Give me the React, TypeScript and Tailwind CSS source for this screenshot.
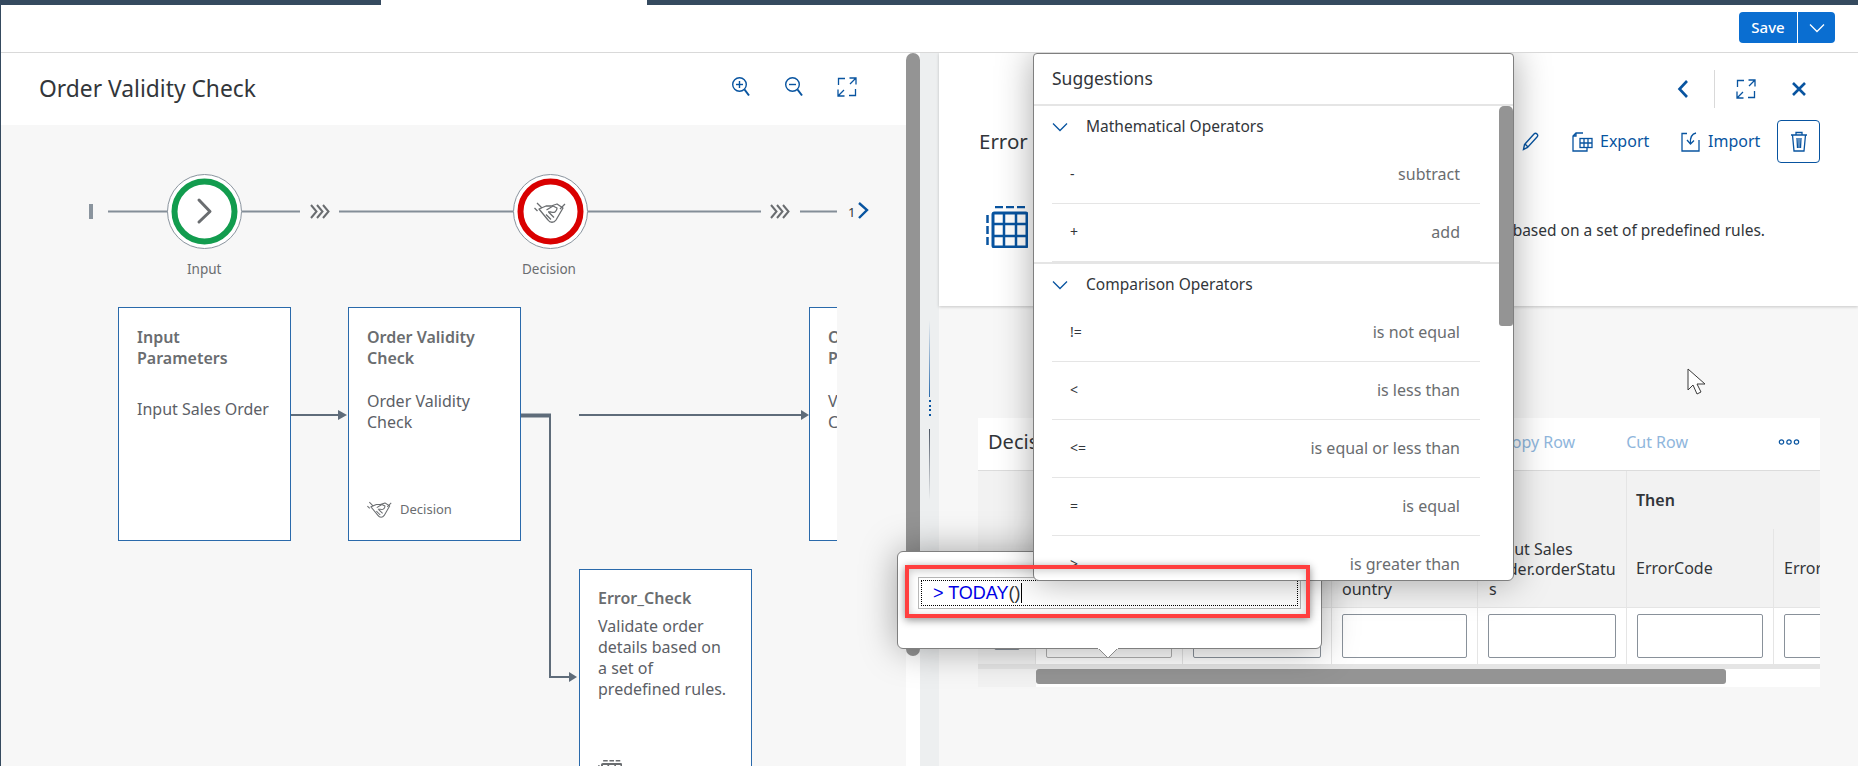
const BLUE = '#0854a0';

function ZoomGlass({ minus = false }: { minus?: boolean }) {
  return (
    <svg width="20" height="22" viewBox="0 0 20 22" fill="none" stroke={BLUE} strokeWidth="1.4">
      <circle cx="8.5" cy="8.5" r="6.8" />
      <path d="M13.5 13.5 L18 19.5" strokeWidth="2" />
      <path d="M5 8.5 H12" />
      {!minus && <path d="M8.5 5 V12" />}
    </svg>
  );
}

function FullScreenIcon() {
  return (
    <svg width="20" height="20" viewBox="0 0 20 20" fill="none" stroke={BLUE} strokeWidth="1.3">
      <path d="M8 1.5 H1.5 V8" />
      <path d="M12 18.5 H18.5 V12" />
      <path d="M12.5 1 H19 V7.5 M19 1 L13 7" />
      <path d="M1 12.5 V19 H7.5 M1 19 L7 13" />
    </svg>
  );
}

function Handshake({ size = 32, color = '#6a6d70' }: { size?: number; color?: string }) {
  return (
    <svg width={size} height={size * 0.8125} viewBox="0 0 32 26" fill="none" stroke={color} strokeWidth="1.3" strokeLinejoin="round">
      <path d="M3 4 L8 9 M0.5 9 L3.5 12 M31 5 L26 10" />
      <path d="M5 10 L14 21 C16 24 20 24 22 21 L29 9 L23 5 L17 7 L12 7 Z" />
      <path d="M12.5 11 L19 7 L23 9 C23 12 20.5 14.5 17 13 L14 13" />
      <path d="M12 15.5 L17 20.5 M15 13.5 L20 18.5" />
    </svg>
  );
}

function TableIcon({ size = 42, stroke = 2.5, color = BLUE }: { size?: number; stroke?: number; color?: string }) {
  return (
    <svg width={size} height={size} viewBox="0 0 42 42" fill="none" stroke={color} strokeWidth={stroke}>
      <path d="M9 1 H17 M20 1 H28 M31 1 H39" />
      <path d="M1.5 9 V17 M1.5 20 V28 M1.5 31 V39" />
      <rect x="7" y="7" width="34" height="34" rx="1.5" strokeWidth={stroke + 0.5} />
      <path d="M18 7 V41 M30 7 V41 M7 18 H41 M7 30 H41" />
    </svg>
  );
}

function FlowChevrons() {
  return (
    <svg width="20" height="16" viewBox="0 0 20 16" fill="none" stroke="#6a6d70" strokeWidth="2">
      <path d="M1 1.5 L6.5 8 L1 14.5 M7 1.5 L12.5 8 L7 14.5 M13 1.5 L18.5 8 L13 14.5" />
    </svg>
  );
}

function FlowNode({ ring, cx }: { ring: string; cx: number }) {
  return (
    <>
      <circle cx={cx} cy="86.5" r="37" fill="#fff" stroke="#8a949e" strokeWidth="1" />
      <circle cx={cx} cy="86.5" r="30" fill="#fff" stroke={ring} strokeWidth="6" />
    </>
  );
}

function ProcessFlow() {
  return (
    <svg className="absolute left-0 top-0" width="880" height="140" viewBox="0 0 880 140" fill="none">
      <rect x="88" y="79" width="4" height="15" fill="#8a949e" />
      <g stroke="#848e98" strokeWidth="2">
        <path d="M107 86.5 H167 M241 86.5 H299 M338 86.5 H512 M587 86.5 H760 M799 86.5 H836" />
      </g>
      <FlowNode ring="#129c4e" cx={203.5} />
      <FlowNode ring="#d90000" cx={549.5} />
      <path d="M198 75 L209 86.5 L198 97" stroke="#6a6d70" strokeWidth="3" strokeLinecap="round" strokeLinejoin="round" />
      <g transform="translate(533 74)">
        <Handshake />
      </g>
      <g transform="translate(309 78.5)">
        <FlowChevrons />
      </g>
      <g transform="translate(769 78.5)">
        <FlowChevrons />
      </g>
      <path d="M858 79 L866 86 L858 94" stroke={BLUE} strokeWidth="2.4" transform="translate(0 -1)" />
    </svg>
  );
}

function Connectors() {
  return (
    <svg className="absolute left-0 top-0" width="836" height="641" viewBox="0 0 836 641" fill="none">
      <g stroke="#5f6c7a" strokeWidth="2">
        <path d="M290 290 H338" />
        <path d="M578 290 H800" />
        <path d="M549 290 V552 H568" />
      </g>
      <path d="M520 290.5 H550" stroke="#5f6c7a" strokeWidth="4" />
      <g fill="#5f6c7a">
        <path d="M337 285 L346 290 L337 295 Z" />
        <path d="M800 285 L808 290 L800 295 Z" />
        <path d="M568 547 L576 552 L568 557 Z" />
      </g>
    </svg>
  );
}

function Card({ left, top, height, titleTop = 19, title, body, gap, children }: {
  left: number;
  top: number;
  height: number;
  titleTop?: number;
  title: string[];
  body: string[];
  gap: string;
  children?: React.ReactNode;
}) {
  return (
    <div
      className="absolute w-[173px] border border-[#2a6aab] bg-white pl-[18px] pr-2 text-base leading-[21px]"
      style={{ left, top, height }}
    >
      <div className="font-semibold text-[#6a6d70]" style={{ marginTop: titleTop }}>
        {title.map((line) => (
          <div key={line} className="whitespace-nowrap">{line}</div>
        ))}
      </div>
      <div className={`${gap} text-[#5c6066]`}>
        {body.map((line) => (
          <div key={line} className="whitespace-nowrap">{line}</div>
        ))}
      </div>
      {children}
    </div>
  );
}

function LeftPanel() {
  return (
    <div className="flex w-[905px] flex-col bg-white">
      <div className="flex h-[72px] items-center justify-between pl-[38px] pr-[49px]">
        <h1 className="text-[22.8px] font-normal text-[#32363a]">Order Validity Check</h1>
        <div className="-mt-[5px] flex items-center gap-[33px]">
          <ZoomGlass />
          <ZoomGlass minus />
          <FullScreenIcon />
        </div>
      </div>
      <div className="relative flex-1 bg-[#f7f7f7]">
        <ProcessFlow />
        <span className="absolute left-[186px] top-[134px] text-[13.5px] text-[#6a6d70]">Input</span>
        <span className="absolute left-[521px] top-[134px] text-[13.5px] text-[#6a6d70]">Decision</span>
        <span className="absolute left-[847px] top-[78px] text-[13px] text-[#32363a]">1</span>
        <div className="absolute left-0 top-0 h-full w-[836px] overflow-hidden">
          <Connectors />
          <Card left={117} top={182} height={234} title={['Input', 'Parameters']} body={['Input Sales Order']} gap="mt-[30px]" />
          <Card left={347} top={182} height={234} title={['Order Validity', 'Check']} body={['Order Validity', 'Check']} gap="mt-[22px]">
            <div className="absolute bottom-[20px] left-[18px] flex items-center gap-2 text-[13px] text-[#6a6d70]">
              <Handshake size={25} />
              <span>Decision</span>
            </div>
          </Card>
          <Card left={808} top={182} height={234} title={['Order', 'Parameters']} body={['Validate', 'Check']} gap="mt-[22px]" />
          <Card left={578} top={444} height={260} titleTop={18} title={['Error_Check']} body={['Validate order', 'details based on', 'a set of', 'predefined rules.']} gap="mt-[7px]">
            <div className="absolute left-[18px] top-[190px]">
              <TableIcon size={24} stroke={3} color="#6a6d70" />
            </div>
          </Card>
        </div>
      </div>
    </div>
  );
}

function Sash() {
  return (
    <div className="flex w-[19px] flex-col items-center bg-[#edeff0]">
      <div className="mt-[267px] h-[77px] w-px bg-gradient-to-b from-transparent to-[#2a6aab]" />
      <div className="mt-[3px] flex h-[16px] flex-col justify-between">
        {[0, 1, 2, 3].map((i) => (
          <div key={i} className="h-[2px] w-[2px] bg-[#0854a0]" />
        ))}
      </div>
      <div className="mt-[13px] h-[71px] w-px bg-gradient-to-b from-[#4b5563] to-transparent" />
    </div>
  );
}

function HeaderCell({ className = '', children }: { className?: string; children?: React.ReactNode }) {
  return <div className={`shrink-0 border-r border-[#e5e5e5] ${className}`}>{children}</div>;
}

function ValueInput({ muted = false }: { muted?: boolean }) {
  return <div className={`h-[44px] flex-1 rounded-[2px] border bg-white ${muted ? 'border-[#b0b0b0]' : 'border-[#89919a]'}`} />;
}

function DecisionTable() {
  const columns = ['w-[58px]', 'w-[147px]', 'w-[149px]', 'w-[146px]', 'w-[149px]', 'w-[147px]'];
  return (
    <div className="flex w-[842px] flex-col overflow-hidden bg-white text-base text-[#32363a]">
      <div className="flex h-[52px] items-center pb-[4px] pl-[10px] pr-[20px]">
        <span className="text-[20px]">Decision Table</span>
        <div className="ml-auto flex items-center text-base text-[#8fb6dc]">
          <span>Copy Row</span>
          <span className="ml-[51px]">Cut Row</span>
          <svg className="ml-[90px]" width="22" height="8" viewBox="0 0 22 8" fill="none" stroke={BLUE} strokeWidth="1.2">
            <circle cx="3.5" cy="4" r="2.2" />
            <circle cx="11" cy="4" r="2.2" />
            <circle cx="18.5" cy="4" r="2.2" />
          </svg>
        </div>
      </div>
      <div className="flex h-[137px] border-t border-[#dcdcdc] bg-[#f2f2f2]">
        <HeaderCell className={columns[0]} />
        <HeaderCell className={columns[1]} />
        <HeaderCell className={columns[2]} />
        <HeaderCell className={`${columns[3]} flex items-end px-[10px] pb-[8px] leading-[20px]`}>
          <span className="whitespace-nowrap">Input Sales<br />Order.c<br />ountry</span>
        </HeaderCell>
        <HeaderCell className={`${columns[4]} flex items-end px-[11px] pb-[8px] leading-[20px]`}>
          <span className="whitespace-nowrap">Input Sales<br />Order.orderStatu<br />s</span>
        </HeaderCell>
        <div className="flex min-w-0 flex-1 flex-col overflow-hidden whitespace-nowrap">
          <div className="flex h-[58px] items-center pl-[9px] font-semibold">Then</div>
          <div className="flex flex-1">
            <div className="w-[147px] shrink-0 border-r border-[#e5e5e5] pl-[9px] pt-[27px]">ErrorCode</div>
            <div className="pl-[10px] pt-[27px]">Error</div>
          </div>
        </div>
      </div>
      <div className="flex h-[58px] border-y border-[#e5e5e5]">
        <div className={`${columns[0]} shrink-0 border-r border-[#e5e5e5] bg-[#f2f2f2] px-[16px] pt-[26px]`}>
          <div className="h-[16px] w-[26px] rounded-[2px] border border-[#89919a] bg-white" />
        </div>
        {columns.slice(1).map((col, i) => (
          <div key={col + i} className={`${col} flex shrink-0 border-r border-[#e5e5e5] px-[10px] pt-[6px]`}>
            <ValueInput muted={i === 0} />
          </div>
        ))}
        <div className="min-w-0 flex-1 overflow-hidden pl-[10px] pt-[6px]">
          <div className="h-[44px] w-[60px] rounded-[2px] border border-[#89919a] bg-white" />
        </div>
      </div>
      <div className="flex h-[22px] border-t-[4px] border-[#e5e5e5]">
        <div className="w-[58px] bg-[#f2f2f2]" />
        <div className="h-[15px] w-[690px] rounded-[3px] bg-[#949494]" />
      </div>
    </div>
  );
}

function RightPanel() {
  return (
    <div className="flex flex-1 flex-col bg-[#f7f7f7]">
      <div className="flex h-[253px] flex-col bg-white pt-[17px] shadow-[0_1px_3px_rgba(0,0,0,0.2)]">
        <div className="flex h-[38px] items-center justify-end pr-[51px]">
          <svg width="12" height="20" viewBox="0 0 12 20" fill="none" stroke={BLUE} strokeWidth="2.6">
            <path d="M10 2 L2.5 10 L10 18" />
          </svg>
          <div className="ml-[25px] h-[38px] w-px bg-[#d9d9d9]" />
          <div className="ml-[21px]"><FullScreenIcon /></div>
          <svg className="ml-[35px]" width="16" height="16" viewBox="0 0 16 16" fill="none" stroke={BLUE} strokeWidth="2.6">
            <path d="M2 2 L14 14 M14 2 L2 14" />
          </svg>
        </div>
        <div className="mt-[12px] flex h-[43px] items-center justify-between pl-[40px] pr-[38px]">
          <span className="text-[20.5px] text-[#32363a]">Error Check</span>
          <div className="flex items-center text-base text-[#0854a0]">
            <svg width="17" height="19" viewBox="0 0 17 19" fill="none" stroke={BLUE} strokeWidth="1.4">
              <path d="M1.5 17.5 L2.5 12.5 L12 2 C13 1 14 1 15 2 C16 3 16 4 15 5 L5.5 15.5 Z M3 12 L6 15" />
            </svg>
            <svg className="ml-[33px]" width="21" height="20" viewBox="0 0 21 20" fill="none" stroke={BLUE} strokeWidth="1.3">
              <path d="M11 1 H4 L1 4 V19 H15 V16 M4 1 V4 H1" />
              <rect x="8" y="6.5" width="12" height="9" />
              <path d="M12 6.5 V15.5 M16 6.5 V15.5 M8 11 H20" />
            </svg>
            <span className="ml-[7px] -mt-[2px] w-[48px]">Export</span>
            <svg className="ml-[33px]" width="20" height="20" viewBox="0 0 20 20" fill="none" stroke={BLUE} strokeWidth="1.3">
              <path d="M6 1.5 H1 V19 H18 V8" />
              <path d="M15 1 C11 2 9 5 9.5 11 M6 8 L9.5 12 L13 8.5" />
            </svg>
            <span className="ml-[7px] -mt-[2px] w-[48px]">Import</span>
            <button className="ml-[21px] flex h-[43px] w-[43px] items-center justify-center rounded-[4px] border border-[#0854a0]">
              <svg width="18" height="21" viewBox="0 0 18 21" fill="none" stroke={BLUE} strokeWidth="1.3">
                <path d="M1 4 H17 M6 4 V1.5 H12 V4 M2.5 4 L4 20 H14 L15.5 4 M7 7 L7.5 17 M9 7 V17 M11 7 L10.5 17" />
              </svg>
            </button>
          </div>
        </div>
        <div className="mt-[43px] flex h-[41px] items-center justify-between pl-[47px] pr-[93px]">
          <TableIcon />
          <span className="mt-[9px] text-[15.5px] text-[#32363a]">Validate order details based on a set of predefined rules.</span>
        </div>
      </div>
      <div className="pl-[39px] pt-[112px]">
        <DecisionTable />
      </div>
    </div>
  );
}

const MATH_OPS = [
  { symbol: '-', label: 'subtract' },
  { symbol: '+', label: 'add' },
];

const COMPARE_OPS = [
  { symbol: '!=', label: 'is not equal' },
  { symbol: '<', label: 'is less than' },
  { symbol: '<=', label: 'is equal or less than' },
  { symbol: '=', label: 'is equal' },
  { symbol: '>', label: 'is greater than' },
];

function SuggestionGroup({ title, items }: { title: string; items: { symbol: string; label: string }[] }) {
  return (
    <div>
      <div className="flex h-[40px] items-center gap-[18px] pl-[18px] pt-[2px]">
        <svg width="16" height="10" viewBox="0 0 16 10" fill="none" stroke={BLUE} strokeWidth="1.3">
          <path d="M1 1.5 L8 8.5 L15 1.5" />
        </svg>
        <span className="text-[15.5px] text-[#32363a]">{title}</span>
      </div>
      <div className="ml-[18px] mr-[19px]">
        {items.map((item) => (
          <div key={item.symbol} className="flex h-[58px] items-center justify-between border-b border-[#e5e5e5] pb-[2px] pl-[18px] pr-[20px] text-base">
            <span className="text-[14px] text-[#32363a]">{item.symbol}</span>
            <span className="text-[#6a6d70]">{item.label}</span>
          </div>
        ))}
      </div>
    </div>
  );
}

function SuggestionsPopover() {
  return (
    <div className="absolute left-[1032px] top-0 z-20 flex h-[528px] w-[481px] flex-col overflow-hidden rounded-b-[6px] rounded-t-[4px] border border-[#7f7f7f] bg-white shadow-[0_0_36px_rgba(0,0,0,0.34)]">
      <div className="flex h-[52px] shrink-0 items-center border-b-2 border-[#e5e5e5] pb-[2px] pl-[18px] text-[17.5px] text-[#32363a]">
        Suggestions
      </div>
      <div className="relative flex-1 overflow-hidden">
        <div className="pr-[14px]">
          <SuggestionGroup title="Mathematical Operators" items={MATH_OPS} />
          <div className="h-[2px] bg-[#e5e5e5]" />
          <SuggestionGroup title="Comparison Operators" items={COMPARE_OPS} />
        </div>
        <div className="absolute right-0 top-0 h-[220px] w-[14px] rounded-b-[3px] rounded-t-[5px] bg-[#949494]" />
      </div>
    </div>
  );
}

function FormulaPopover() {
  return (
    <div className="absolute left-[896px] top-[498px] z-10 h-[98px] w-[425px] rounded-[6px] border border-[#7f7f7f] bg-white px-[20px] pt-[25px] shadow-[0_0_36px_rgba(0,0,0,0.35)]">
      <div className="h-[32px] border border-[#b8b8b8] p-[2px]">
        <div className="flex h-full items-center border border-dotted border-black pl-[11px] font-['Liberation_Sans',sans-serif] text-[18px]">
          <span className="text-[#0000e6]">&gt; TODAY</span>
          <span className="text-[#333]">()</span>
          <span className="h-[20px] w-px bg-black" />
        </div>
      </div>
      <svg className="absolute left-[200px] top-[96px]" width="20" height="11" viewBox="0 0 20 11">
        <path d="M0 0 L10 10 L20 0" fill="#fff" stroke="#8a8a8a" />
        <path d="M0 0 H20" stroke="#fff" strokeWidth="2" />
      </svg>
    </div>
  );
}

export default function App() {
  return (
    <div className="flex h-[766px] w-[1858px] flex-col overflow-hidden border-l border-[#354a5f] bg-white font-['Noto_Sans',sans-serif]">
      <div className="flex h-[5px] shrink-0">
        <div className="w-[380px] bg-[#354a5f]" />
        <div className="w-[266px] bg-white" />
        <div className="flex-1 bg-[#354a5f]" />
      </div>
      <div className="flex h-[48px] shrink-0 items-center justify-end border-b border-[#d9d9d9] pr-[23px]">
        <div className="-mt-[2px] flex h-[31px] overflow-hidden rounded-[4px] bg-[#0a6ed1] text-[15px] font-medium text-white">
          <span className="flex w-[59px] items-center justify-center border-r border-white">Save</span>
          <span className="flex w-[37px] items-center justify-center">
            <svg width="16" height="10" viewBox="0 0 16 10" fill="none" stroke="#fff" strokeWidth="1.3">
              <path d="M1 1.5 L8 8.5 L15 1.5" />
            </svg>
          </span>
        </div>
      </div>
      <div className="relative flex min-h-0 flex-1 overflow-hidden">
        <LeftPanel />
        <div className="w-[14px] bg-white">
          <div className="h-[603px] rounded-[7px] bg-[#949494]" />
        </div>
        <Sash />
        <RightPanel />
        <FormulaPopover />
        <SuggestionsPopover />
        <div className="absolute left-[904px] top-[512px] z-30 h-[53px] w-[405px] border-4 border-[#ff3f3f] shadow-[0_2px_8px_rgba(0,0,0,0.45),inset_0_2px_8px_rgba(0,0,0,0.2)]" />
        <svg className="absolute left-[1686px] top-[315px] z-30" width="22" height="28" viewBox="0 0 22 28" fill="#fff" stroke="#3a3a3a" strokeWidth="1">
          <path d="M1 1 L1 22 L6 17 L10 26 L14 24 L10 16 L18 16 Z" />
        </svg>
      </div>
    </div>
  );
}
